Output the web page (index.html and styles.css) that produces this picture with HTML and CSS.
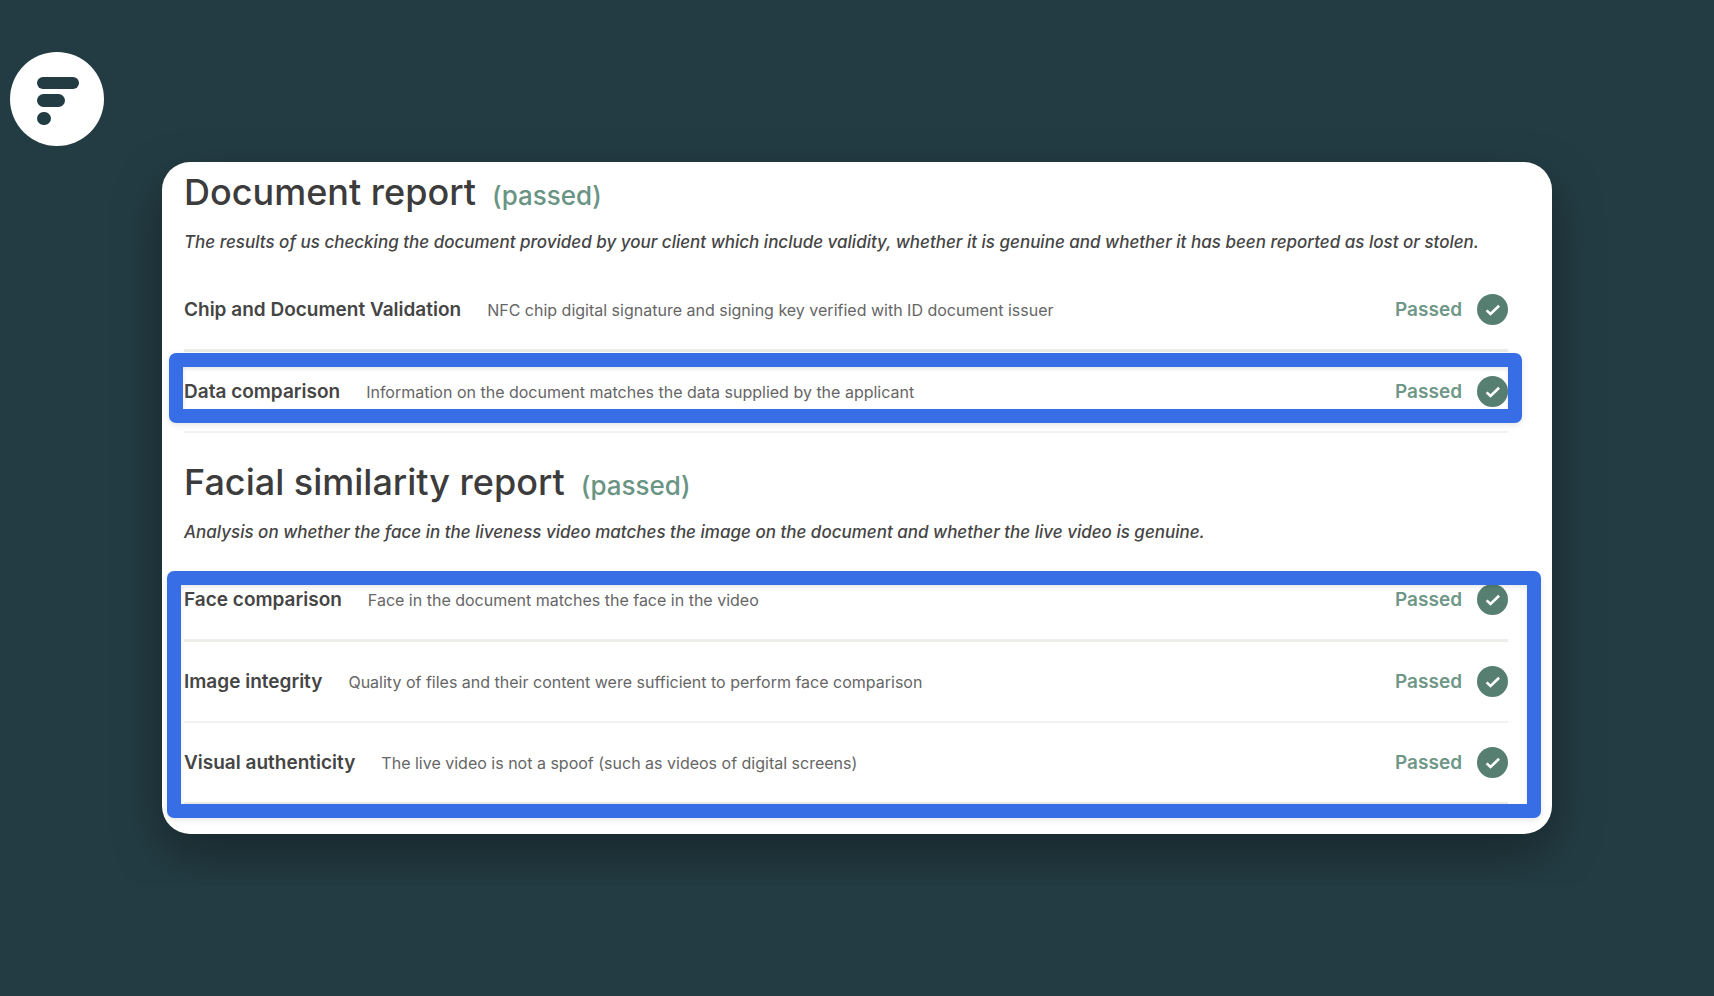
FILE: index.html
```
<!DOCTYPE html>
<html lang="en">
<head>
  <meta charset="UTF-8">
  <meta name="viewport" content="width=device-width, initial-scale=1.0">
  <title>Document report</title>
  <link rel="stylesheet" href="styles.css">
</head>
<body>
  <!-- Check icon shared by all rows -->
  <svg class="sprite" aria-hidden="true">
    <symbol id="check" viewBox="0 0 31 31">
      <circle cx="15.5" cy="15.5" r="15.5" fill="#567e71"/>
      <path d="M9.6 16.4l3.9 3.6 8.6-8.2" fill="none" stroke="#fff" stroke-width="2.6"/>
    </symbol>
  </svg>

  <header class="logo">
    <svg viewBox="0 0 94 94" role="img" aria-label="Logo">
      <circle cx="47" cy="47" r="47" fill="#fff"/>
      <g fill="#233c43">
        <rect x="27" y="25" width="42" height="12" rx="6"/>
        <rect x="27" y="42" width="28" height="13" rx="6.5"/>
        <rect x="27" y="60" width="14" height="13" rx="6.5"/>
      </g>
    </svg>
  </header>

  <main class="card">
    <!-- Document report -->
    <section class="report">
      <h2>Document report <span class="status">(passed)</span></h2>
      <p class="summary">The results of us checking the document provided by your client which include validity, whether it is genuine and whether it has been reported as lost or stolen.</p>
      <div class="row thick">
        <h3>Chip and Document Validation</h3>
        <p>NFC chip digital signature and signing key verified with ID document issuer</p>
        <span class="result">Passed <svg><use href="#check"/></svg></span>
      </div>
      <div class="group group-data">
        <div class="row">
          <h3>Data comparison</h3>
          <p>Information on the document matches the data supplied by the applicant</p>
          <span class="result">Passed <svg><use href="#check"/></svg></span>
        </div>
      </div>
    </section>

    <!-- Facial similarity report -->
    <section class="report">
      <h2>Facial similarity report <span class="status">(passed)</span></h2>
      <p class="summary">Analysis on whether the face in the liveness video matches the image on the document and whether the live video is genuine.</p>
      <div class="group group-face">
        <div class="row thick">
          <h3>Face comparison</h3>
          <p>Face in the document matches the face in the video</p>
          <span class="result">Passed <svg><use href="#check"/></svg></span>
        </div>
        <div class="row">
          <h3>Image integrity</h3>
          <p>Quality of files and their content were sufficient to perform face comparison</p>
          <span class="result">Passed <svg><use href="#check"/></svg></span>
        </div>
        <div class="row thick">
          <h3>Visual authenticity</h3>
          <p>The live video is not a spoof (such as videos of digital screens)</p>
          <span class="result">Passed <svg><use href="#check"/></svg></span>
        </div>
      </div>
    </section>
  </main>
</body>
</html>
```
FILE: styles.css
```
* {
  box-sizing: border-box;
}

body {
  background-color: #233c43;
  color: #454545;
  font-family: "Inter", sans-serif;
  margin: 0;
  padding: 52px 0;
}

h2, h3, p {
  margin: 0;
}

.sprite {
  display: none;
}

.logo {
  padding-left: 10px;
}

.logo svg {
  display: block;
  width: 94px;
  height: 94px;
}

.card {
  margin: 16px 162px 0;
  padding: 0 44px 29px 22px;
  background-color: #fff;
  border-radius: 28px;
  box-shadow: 0 20px 50px rgba(0, 0, 0, 0.35);
}

.report {
  padding-top: 4px;
}

.report + .report {
  padding-top: 23px;
}

h2 {
  display: flex;
  align-items: baseline;
  gap: 16px;
  font-size: 36px;
  font-weight: 500;
  line-height: 52px;
  color: #3c3c3c;
}

.status {
  font-size: 26px;
  line-height: 30px;
  color: #6a9484;
}

.summary {
  padding-bottom: 4px;
  font-size: 17px;
  font-style: italic;
  font-weight: 500;
  line-height: 48px;
}

.row {
  display: flex;
  align-items: center;
  gap: 26px;
  padding: 24px 0;
  border-bottom: 2px solid #f2f2f0;
}

.row.thick {
  border-bottom: 3px solid #ecece9;
}

.row h3 {
  font-size: 19px;
  font-weight: 600;
  line-height: 30px;
}

.row p {
  font-size: 16px;
  line-height: 30px;
  color: #666;
}

.result {
  display: flex;
  align-items: center;
  gap: 15px;
  margin-left: auto;
  font-size: 19px;
  font-weight: 600;
  line-height: 30px;
  color: #6f9787;
}

.result svg {
  width: 31px;
  height: 31px;
}

/* Blue highlight frames drawn over the rows */
.group {
  position: relative;
}

.group::after {
  content: "";
  position: absolute;
  border: 14px solid #376ee6;
  border-radius: 7px;
  box-shadow: 0 2px 6px rgba(0, 0, 0, 0.1), inset 0 2px 4px rgba(0, 0, 0, 0.1);
  pointer-events: none;
}

.group-data::after {
  inset: 1px -14px 10px -15px;
}

.group-face::after {
  inset: 11px -33px -13px -17px;
}
```
